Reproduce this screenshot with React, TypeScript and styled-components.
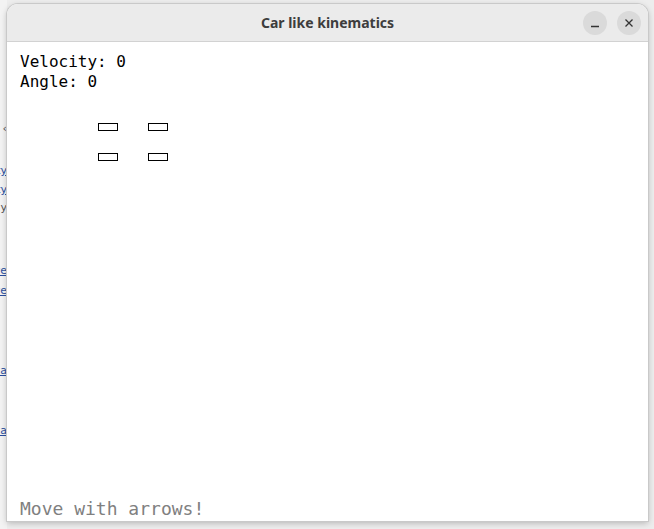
import styled, { createGlobalStyle } from "styled-components";

const GlobalStyle = createGlobalStyle`
  html, body {
    margin: 0;
    padding: 0;
    width: 654px;
    height: 529px;
    overflow: hidden;
    background: #ededed;
  }
`;

const Desktop = styled.div`
  display: flex;
  width: 654px;
  height: 529px;
  overflow: hidden;
`;

const PageBehind = styled.div`
  width: 7px;
  flex: none;
  display: flex;
  flex-direction: column;
  align-items: flex-end;
  overflow: hidden;
  background: #f3f3f3;
  font-family: "DejaVu Sans", sans-serif;
  font-size: 11px;
  line-height: 13px;
`;

const Fragment = styled.span<{ $gap: number; $link?: boolean }>`
  margin-top: ${(p) => p.$gap}px;
  white-space: nowrap;
  color: ${(p) => (p.$link ? "#2b4f9e" : "#555")};
  text-decoration: ${(p) => (p.$link ? "underline" : "none")};
`;

const Window = styled.div`
  width: 641px;
  height: 517px;
  margin-top: 4px;
  flex: none;
  display: flex;
  flex-direction: column;
  border-radius: 11px 11px 0 0;
  overflow: hidden;
  background: #ffffff;
  box-shadow: 0 0 0 1px #c9c9c9, 0 2px 6px rgba(0, 0, 0, 0.25);
`;

const TitleBar = styled.div`
  height: 37px;
  flex: none;
  display: flex;
  align-items: center;
  justify-content: center;
  position: relative;
  background: #ebebeb;
  border-bottom: 1px solid #d2d2d2;
`;

const Title = styled.span`
  font-family: "Noto Sans", "Open Sans", sans-serif;
  font-weight: 700;
  font-size: 14px;
  color: #3d3d3d;
`;

const Controls = styled.div`
  position: absolute;
  right: 7px;
  top: 7px;
  display: flex;
  gap: 10px;
`;

const RoundButton = styled.div`
  width: 24px;
  height: 24px;
  border-radius: 50%;
  background: #dadada;
  display: flex;
  align-items: center;
  justify-content: center;
`;

const Canvas = styled.div`
  flex: 1;
  display: flex;
  flex-direction: column;
  padding: 10px 12px 1px 13px;
  background: #ffffff;
`;

const Stat = styled.div`
  font-family: "DejaVu Sans Mono", monospace;
  font-size: 16px;
  line-height: 20px;
  color: #000;
`;

const Car = styled.div`
  margin: 31px 0 0 78px;
  display: grid;
  grid-template-columns: 20px 20px;
  column-gap: 30px;
  row-gap: 22px;
`;

const Wheel = styled.div`
  width: 20px;
  height: 8px;
  box-sizing: border-box;
  border: 1px solid #000;
`;

const Hint = styled.div`
  margin-top: auto;
  font-family: "DejaVu Sans Mono", monospace;
  font-size: 18px;
  line-height: 22px;
  color: #808080;
`;

const fragments = [
  { gap: 122, text: "‹", link: false },
  { gap: 29, text: "ty", link: true },
  { gap: 6, text: "ty", link: true },
  { gap: 5, text: "y", link: false },
  { gap: 50, text: "ve", link: true },
  { gap: 7, text: "ve", link: true },
  { gap: 67, text: "ca", link: true },
  { gap: 47, text: "ca", link: true },
];

export default function App() {
  return (
    <>
      <GlobalStyle />
      <Desktop>
        <PageBehind>
          {fragments.map((f, i) => (
            <Fragment key={i} $gap={f.gap} $link={f.link}>
              {f.text}
            </Fragment>
          ))}
        </PageBehind>
        <Window>
          <TitleBar>
            <Title>Car like kinematics</Title>
            <Controls>
              <RoundButton>
                <svg width="10" height="10" viewBox="0 0 10 10">
                  <path d="M1 8.5h8" stroke="#333" strokeWidth="1.3" />
                </svg>
              </RoundButton>
              <RoundButton>
                <svg width="10" height="10" viewBox="0 0 10 10">
                  <path d="M1.5 1.5l7 7M8.5 1.5l-7 7" stroke="#333" strokeWidth="1.3" />
                </svg>
              </RoundButton>
            </Controls>
          </TitleBar>
          <Canvas>
            <Stat>Velocity: 0</Stat>
            <Stat>Angle: 0</Stat>
            <Car>
              <Wheel />
              <Wheel />
              <Wheel />
              <Wheel />
            </Car>
            <Hint>Move with arrows!</Hint>
          </Canvas>
        </Window>
      </Desktop>
    </>
  );
}
